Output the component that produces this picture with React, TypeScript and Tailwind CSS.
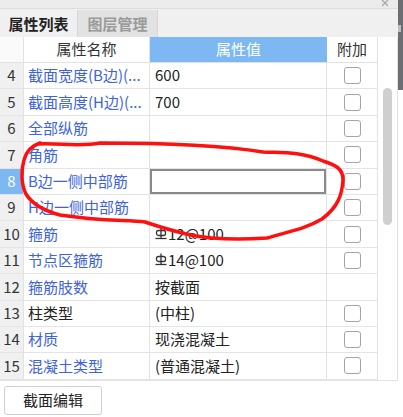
import React from 'react';

type Row = {
  no: number;
  name: string;
  value?: string;
  rebar?: boolean;
  blue?: boolean;
  check?: boolean;
  editing?: boolean;
};

const rows: Row[] = [
  { no: 4, name: '截面宽度(B边)(...', value: '600', blue: true, check: true },
  { no: 5, name: '截面高度(H边)(...', value: '700', blue: true, check: true },
  { no: 6, name: '全部纵筋', blue: true, check: true },
  { no: 7, name: '角筋', blue: true, check: true },
  { no: 8, name: 'B边一侧中部筋', blue: true, check: true, editing: true },
  { no: 9, name: 'H边一侧中部筋', blue: true, check: true },
  { no: 10, name: '箍筋', value: '12@100', rebar: true, blue: true, check: true },
  { no: 11, name: '节点区箍筋', value: '14@100', rebar: true, blue: true, check: true },
  { no: 12, name: '箍筋肢数', value: '按截面', blue: true },
  { no: 13, name: '柱类型', value: '(中柱)', check: true },
  { no: 14, name: '材质', value: '现浇混凝土', blue: true, check: true },
  { no: 15, name: '混凝土类型', value: '(普通混凝土)', blue: true, check: true },
];

function RebarMark() {
  // HRB400 symbol
  return (
    <svg width="12" height="14" viewBox="0 0 12 14" className="mr-[1px] shrink-0">
      <line x1="6" y1="0.5" x2="6" y2="11" stroke="#333" strokeWidth="1.3" />
      <rect x="1.5" y="3.5" width="9" height="5" rx="2" fill="none" stroke="#333" strokeWidth="1.3" />
      <line x1="0.5" y1="11.5" x2="11.5" y2="11.5" stroke="#333" strokeWidth="1.3" />
    </svg>
  );
}

function Checkbox() {
  return <div className="w-[17px] h-[17px] rounded-[3px] border-[1.5px] border-[#a4a4a4] bg-white" />;
}

export default function App() {
  return (
    <div
      className="relative w-[403px] h-[417px] overflow-hidden bg-white flex text-[15px] text-[#222]"
      style={{ fontFamily: '"Noto Sans CJK SC", "Noto Sans", sans-serif' }}
    >
      <div className="w-[398px] flex flex-col">
        {/* title strip */}
        <div className="h-[9px] bg-[#ececec] border-b border-[#dcdcdc] flex justify-end items-start pr-[9px]">
          <svg width="8" height="7" viewBox="0 0 8 7">
            <path d="M1 0 L7 6 M7 0 L1 6" stroke="#a8a8a8" strokeWidth="1.3" />
          </svg>
        </div>

        {/* tabs */}
        <div className="h-[28px] bg-[#f0f0f0] flex">
          <div className="w-[77px] flex items-center justify-center font-bold text-[#222] leading-none">
            属性列表
          </div>
          <div className="w-[81px] mt-[1px] bg-[#e2e2e2] border-l border-r border-[#d6d6d6] flex items-center justify-center font-bold text-[#9a9a9a] leading-none">
            图层管理
          </div>
        </div>

        {/* table */}
        <div className="flex border-r border-b border-[#e2e2e2]">
          <div className="w-[377px] flex flex-col">
            <div className="h-[26px] flex border-b border-[#e2e2e2]">
              <div className="w-[24px] border-r border-[#e2e2e2] bg-[#fafafa]" />
              <div className="w-[126px] border-r border-[#e2e2e2] flex items-center justify-center text-[#333]">
                属性名称
              </div>
              <div className="w-[177px] bg-[#7db8f2] flex items-center justify-center text-white">属性值</div>
              <div className="w-[50px] flex items-center justify-center text-[#333]">附加</div>
            </div>
            {rows.map((r) => (
              <div key={r.no} className="h-[26.4px] flex border-b border-[#e4e4e4]">
                <div
                  className={
                    r.editing
                      ? 'w-[24px] bg-[#7db8f2] text-white border-r border-[#e2e2e2] flex items-center justify-center'
                      : 'w-[24px] bg-[#f0f0f0] text-[#333] border-r border-[#e2e2e2] flex items-center justify-center'
                  }
                >
                  {r.no}
                </div>
                <div
                  className={
                    r.blue
                      ? 'w-[126px] pl-[4px] border-r border-[#e2e2e2] flex items-center whitespace-nowrap overflow-hidden text-[#3d62dd]'
                      : 'w-[126px] pl-[4px] border-r border-[#e2e2e2] flex items-center whitespace-nowrap overflow-hidden text-[#222]'
                  }
                >
                  {r.name}
                </div>
                <div className="w-[177px] border-r border-[#e2e2e2] flex items-center whitespace-nowrap">
                  {r.editing ? (
                    <div className="w-[176px] h-full border-2 border-[#8a8a8a] bg-white" />
                  ) : (
                    <div className="pl-[5px] flex items-center">
                      {r.rebar && <RebarMark />}
                      {r.value}
                    </div>
                  )}
                </div>
                <div className="w-[50px] flex items-center justify-center">{r.check && <Checkbox />}</div>
              </div>
            ))}
          </div>
          {/* scrollbar */}
          <div className="w-[21px] border-l border-[#e2e2e2] pt-[51px] flex justify-center">
            <div className="w-[9px] h-[137px] rounded-full bg-[#cfcfcf]" />
          </div>
        </div>

        <div className="pt-[5px] pl-[4px]">
          <button className="w-[98px] h-[29px] rounded-[3px] border border-[#cfcfcf] bg-white text-[#222] flex items-center justify-center">
            截面编辑
          </button>
        </div>
      </div>

      {/* right docking strip */}
      <div className="w-[5px] flex flex-col">
        <div className="h-[90px] bg-[#6b6e73] flex flex-col pt-[25px]">
          <div className="h-[7px] w-[3px] bg-[#b9bcc0]" />
        </div>
      </div>

      {/* red annotation */}
      <svg className="absolute inset-0 pointer-events-none" width="403" height="417" viewBox="0 0 403 417">
        <path
          d="M38 144 C60 143 80 147 100 143 C150 143 213 144 263 152 C280 153 300 151 323 161 C335 165 343 168 343 180 C342 195 338 207 322 219 C305 229 290 231 267 238 C250 239 225 239 212 238 C195 237 175 232 145 222 C125 220 100 221 60 215 C45 211 32 204 26 194 C21 184 21 170 24 160 C26 152 31 146 40 143"
          fill="none"
          stroke="#ff1010"
          strokeWidth="3.5"
          strokeLinecap="round"
          strokeLinejoin="round"
        />
      </svg>
    </div>
  );
}
